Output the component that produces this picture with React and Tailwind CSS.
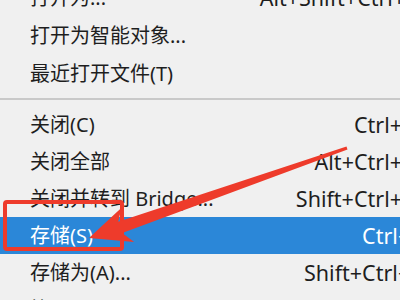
import React from 'react';

const top = [
  { label: '打开为...', key: 'Alt+Shift+Ctrl+O' },
  { label: '打开为智能对象...', key: '' },
  { label: '最近打开文件(T)', key: '' },
];

const bottom = [
  { label: '关闭(C)', key: 'Ctrl+W' },
  { label: '关闭全部', key: 'Alt+Ctrl+W' },
  { label: '关闭并转到 Bridge...', key: 'Shift+Ctrl+W' },
  { label: '存储(S)', key: 'Ctrl+S', active: true },
  { label: '存储为(A)...', key: 'Shift+Ctrl+S' },
  { label: '签入...', key: '' },
];

function Row({ item, h }) {
  return (
    <div
      className={`flex items-center justify-between pl-[30px] pr-[8px] ${h} ${
        item.active ? 'bg-[#2b87d8] text-white' : 'text-[#1e1e1e]'
      }`}
    >
      <span className="whitespace-nowrap">{item.label}</span>
      <span className="whitespace-nowrap text-[21.5px]">{item.key}</span>
    </div>
  );
}

export default function App() {
  return (
    <div className="relative w-[400px] h-[300px] overflow-hidden bg-[#f0f0f0]">
      <div
        className="w-[430px] mt-[-21px] text-[20px] leading-none"
        style={{ fontFamily: '"Noto Sans", "Noto Sans CJK SC", sans-serif' }}
      >
        {top.map((it) => (
          <Row key={it.label} item={it} h="h-[38px]" />
        ))}
        <div className="h-[13px] pt-[5px]">
          <div className="h-[2px] bg-[#c9c9c9]"></div>
        </div>
        {bottom.map((it) => (
          <Row key={it.label} item={it} h="h-[37px]" />
        ))}
      </div>

      {/* annotation: red box + arrow */}
      <div className="absolute left-[3px] top-[200px] w-[121px] h-[51px] border-[4px] border-[#ee3b2b] rounded-[4px]"></div>
      <svg className="absolute inset-0" width="400" height="300" viewBox="0 0 400 300">
        <polygon
          fill="#ee3b2b"
          points="89,238 121.5,207.7 118.2,221.7 346.5,146.6 347.5,149.4 122.2,233.1 134.1,241.9"
        />
      </svg>
    </div>
  );
}
